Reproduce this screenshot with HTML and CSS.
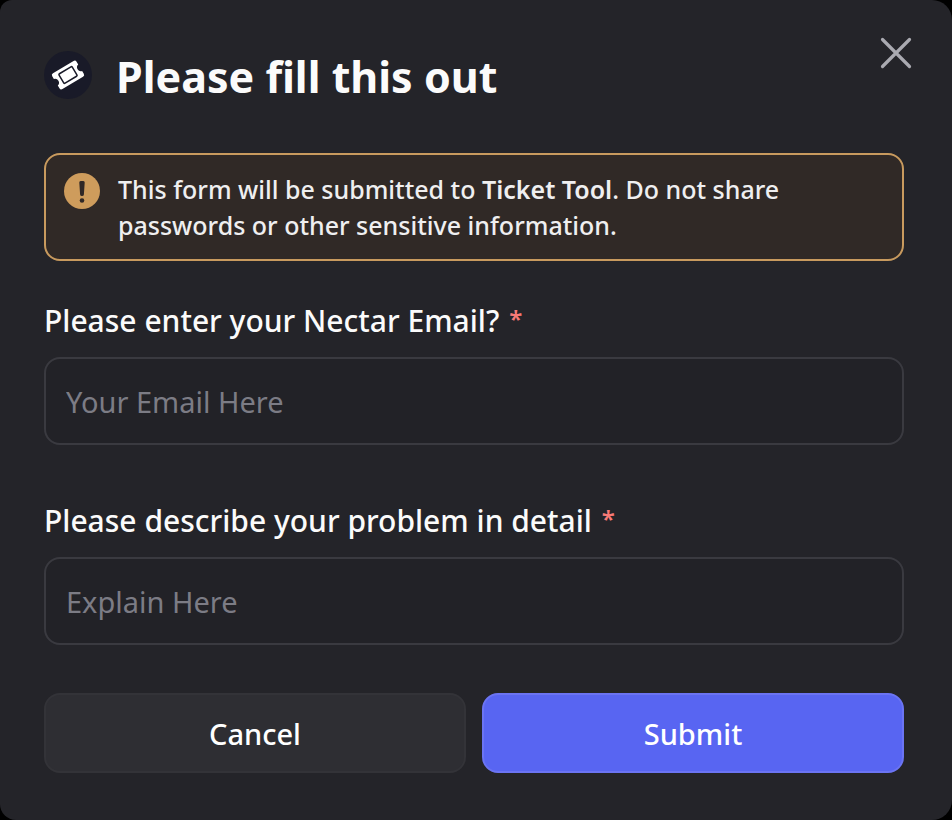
FILE: index.html
```html
<!DOCTYPE html>
<html lang="en">
<head>
  <meta charset="UTF-8">
  <meta name="viewport" content="width=device-width, initial-scale=1.0">
  <title>Please fill this out</title>
  <link rel="stylesheet" href="styles.css">
</head>
<body>
  <main class="modal" role="dialog" aria-labelledby="modal-title">
    <header class="modal-header">
      <svg class="app-icon" viewBox="0 0 48 48" aria-hidden="true">
        <circle cx="24" cy="24" r="24" fill="#191a28"/>
        <g transform="rotate(-31 24 24)">
          <path d="M12 14.800H36Q38.200 14.800 38.200 17V20.200A3.900 3.900 0 0 0 38.200 27.800V31Q38.200 33.200 36 33.200H12Q9.800 33.200 9.800 31V27.800A3.900 3.900 0 0 0 9.800 20.200V17Q9.800 14.800 12 14.800Z" fill="#fff"/>
          <rect x="16.300" y="18.500" width="15.400" height="11" rx="1" fill="#fff" stroke="#191a28" stroke-width="1.500"/>
        </g>
      </svg>
      <h1 class="modal-title" id="modal-title">Please fill this out</h1>
      <button class="close-btn" type="button" aria-label="Close">
        <svg viewBox="0 0 32 32" aria-hidden="true">
          <path d="M2.500 2.500L29.500 29.500M29.500 2.500L2.500 29.500" stroke="#aaaab1" stroke-width="3.200" stroke-linecap="round"/>
        </svg>
      </button>
    </header>

    <div class="notice">
      <svg class="notice-icon" viewBox="0 0 36 36" aria-hidden="true">
        <circle cx="18" cy="18" r="18" fill="#ce9c5c"/>
        <path d="M15.300 9.500Q15.200 8 16.700 8H19.300Q20.800 8 20.700 9.500L19.900 21.500Q19.800 23 18 23Q16.200 23 16.100 21.500Z" fill="#302826"/>
        <circle cx="18" cy="27.500" r="2.300" fill="#302826"/>
      </svg>
      <p class="notice-text">This form will be submitted to <strong>Ticket Tool</strong>. Do not share passwords or other sensitive information.</p>
    </div>

    <form class="modal-form">
      <div class="field">
        <label for="email">Please enter your Nectar Email? <span class="required">*</span></label>
        <input type="text" id="email" name="email" placeholder="Your Email Here" required>
      </div>
      <div class="field">
        <label for="problem">Please describe your problem in detail <span class="required">*</span></label>
        <input type="text" id="problem" name="problem" placeholder="Explain Here" required>
      </div>
      <div class="actions">
        <button class="btn btn-cancel" type="button">Cancel</button>
        <button class="btn btn-submit" type="submit">Submit</button>
      </div>
    </form>
  </main>
</body>
</html>
```
FILE: styles.css
```css
* {
  box-sizing: border-box;
}
body {
  margin: 0;
  background-color: #000;
  color: #fbfbfb;
  font-family: "Noto Sans", "Open Sans", sans-serif;
}
.modal {
  min-height: 100vh;
  padding: 37px 48px 47px 44px;
  background-color: #242429;
  border-radius: 12px 20px 20px 16px;
}
.modal-header {
  display: flex;
  align-items: flex-start;
  margin-bottom: 44px;
}
.app-icon {
  width: 48px;
  height: 48px;
  margin: 14px 24px 0 0;
}
.modal-title {
  flex: 1;
  margin: 8px 0 0;
  font-size: 43px;
  line-height: 64px;
  font-weight: 700;
}
.close-btn {
  width: 32px;
  height: 32px;
  margin-right: -8px;
  padding: 0;
  border: none;
  background: none;
  cursor: pointer;
}
.close-btn svg {
  display: block;
}
.notice {
  display: flex;
  gap: 18px;
  padding: 16px 18px;
  border: 2px solid #c89a5e;
  border-radius: 16px;
  background-color: #302926;
}
.notice-icon {
  flex: none;
  width: 36px;
  height: 36px;
  margin-top: 2px;
}
.notice-text {
  margin: 0;
  color: #efeff0;
  font-size: 25px;
  line-height: 36px;
  font-weight: 500;
}
.notice-text strong {
  font-weight: 600;
}
.modal-form {
  margin-top: 40px;
}
.field {
  margin-bottom: 56px;
}
.field label {
  display: block;
  margin-bottom: 16px;
  font-size: 30px;
  line-height: 40px;
  font-weight: 500;
}
.required {
  margin-left: 2px;
  color: #f87a76;
  font-size: 24px;
  line-height: 24px;
  font-weight: 600;
  vertical-align: 4px;
}
.field input {
  display: block;
  width: 100%;
  height: 88px;
  padding: 0 20px;
  border: 2px solid #3a3a40;
  border-radius: 16px;
  background-color: #222227;
  color: #efeff0;
  font-family: inherit;
  font-size: 29px;
}
.field input::placeholder {
  color: #7c7c85;
  opacity: 1;
}
.actions {
  display: flex;
  gap: 16px;
  margin-top: -8px;
}
.btn {
  flex: 1;
  height: 80px;
  border: 2px solid #333338;
  border-radius: 16px;
  color: #fff;
  font-family: inherit;
  font-size: 29px;
  font-weight: 500;
  cursor: pointer;
}
.btn-cancel {
  background-color: #2e2e33;
}
.btn-submit {
  border-color: #6b74f3;
  background-color: #5865f2;
}
```
